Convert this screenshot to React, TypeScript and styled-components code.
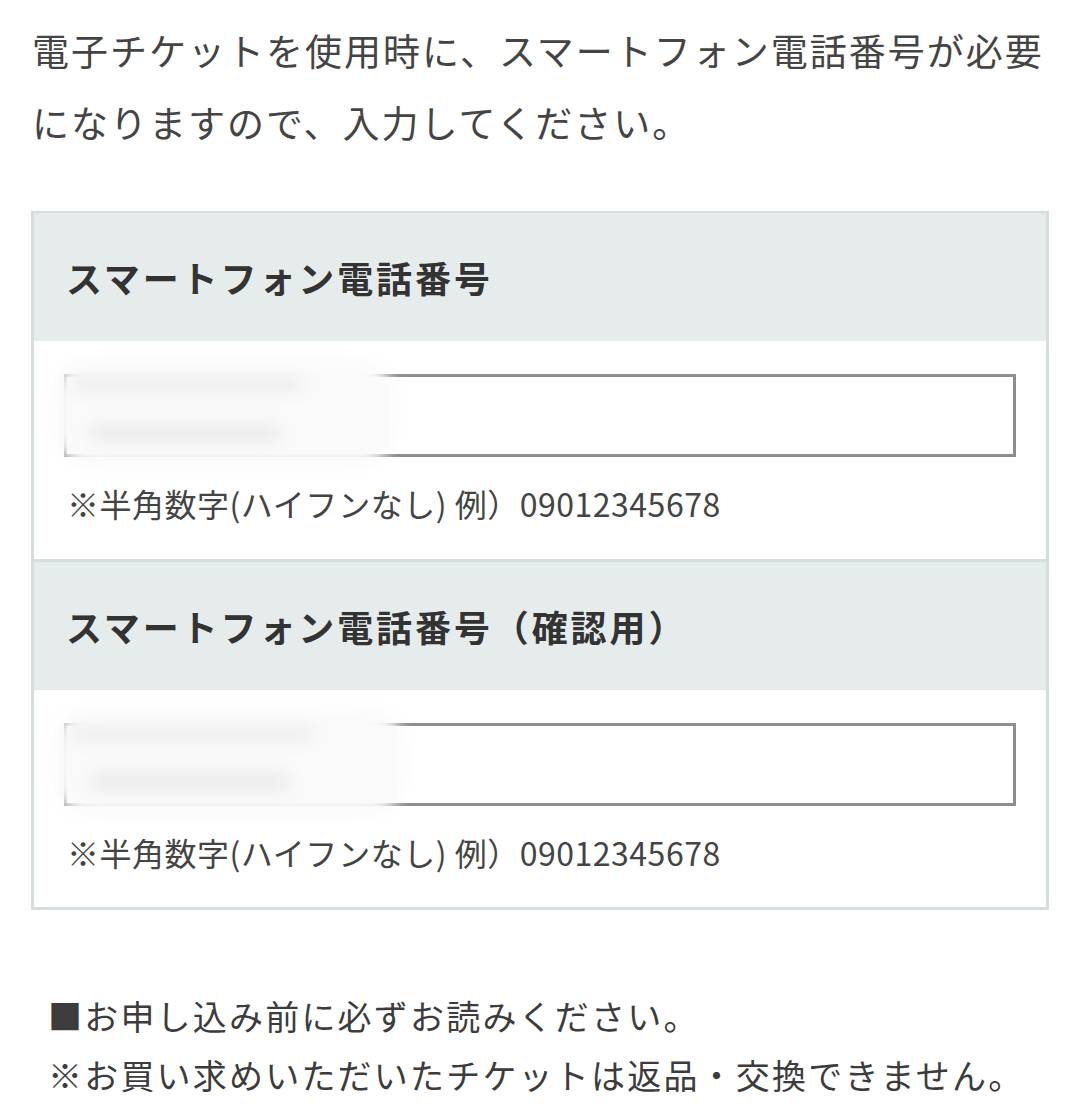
import React from 'react'
import styled, { createGlobalStyle } from 'styled-components'

const GlobalStyle = createGlobalStyle`
  html, body {
    margin: 0;
    padding: 0;
    background: #ffffff;
  }

  body {
    font-family: 'Noto Sans CJK JP', 'Noto Sans', sans-serif;
    color: #3f3f3f;
  }
`

const Page = styled.div`
  padding: 14px 30px 0 31px;
`

const Lead = styled.p`
  margin: 0 0 53px 1px;
  font-size: 37px;
  line-height: 72px;
  letter-spacing: 2px;
  color: #444444;
`

const FormTable = styled.div`
  border: 3px solid #d6dedd;
  border-top-width: 2px;
  display: flex;
  flex-direction: column;
`

const FieldHead = styled.div`
  background: #e6ecec;
  height: 128px;
  display: flex;
  align-items: center;
  padding-left: 32px;
  font-size: 36px;
  font-weight: 700;
  letter-spacing: 2.9px;
  color: #333333;
`

const FieldBody = styled.div<{ last?: boolean }>`
  background: #ffffff;
  padding: 33px 30px 0 30px;
  height: ${({ last }) => (last ? '217px' : '221px')};
  box-sizing: border-box;
  border-bottom: ${({ last }) => (last ? 'none' : '3px solid #d6dedd')};
`

const InputWrap = styled.div`
  position: relative;
`

const PhoneInput = styled.input`
  display: block;
  width: 100%;
  height: 83px;
  box-sizing: border-box;
  border: 3px solid #8d8d8d;
  background: #ffffff;
  outline: none;
  font-size: 32px;
  padding: 0 16px;
`

// 元画像のモザイク部分
const Smudge = styled.div<{ w: number }>`
  position: absolute;
  left: -10px;
  top: -14px;
  width: ${({ w }) => w}px;
  height: 106px;
  border-radius: 36px;
  background: #fafafa;
  filter: blur(7px);
  pointer-events: none;

  &::before,
  &::after {
    content: '';
    position: absolute;
    border-radius: 10px;
    background: #e6e6e6;
    filter: blur(6px);
  }

  &::before {
    left: 18px;
    top: 20px;
    width: ${({ w }) => w - 110}px;
    height: 10px;
  }

  &::after {
    left: 36px;
    top: 66px;
    width: ${({ w }) => w - 150}px;
    height: 14px;
  }
`

const Hint = styled.div`
  margin-top: 26px;
  padding-left: 3px;
  font-size: 32px;
  line-height: 40px;
  letter-spacing: 0.5px;
  color: #444444;
`

const Notes = styled.div`
  margin: 76px 0 0 17px;
  font-size: 34px;
  line-height: 59px;
  letter-spacing: 2.2px;
  color: #3c3c3c;
`

const NoteLine = styled.div``

interface FieldProps {
  label: string
  last?: boolean
  smudge: number
}

const PhoneField: React.FC<FieldProps> = ({ label, last, smudge }) => (
  <>
    <FieldHead>{label}</FieldHead>
    <FieldBody last={last}>
      <InputWrap>
        <PhoneInput type="tel" />
        <Smudge w={smudge} />
      </InputWrap>
      <Hint>※半角数字(ハイフンなし) 例）09012345678</Hint>
    </FieldBody>
  </>
)

export default function App() {
  return (
    <Page>
      <GlobalStyle />
      <Lead>
        電子チケットを使用時に、スマートフォン電話番号が必要になりますので、入力してください。
      </Lead>
      <FormTable>
        <PhoneField label="スマートフォン電話番号" smudge={340} />
        <PhoneField label="スマートフォン電話番号（確認用）" smudge={350} last />
      </FormTable>
      <Notes>
        <NoteLine>■お申し込み前に必ずお読みください。</NoteLine>
        <NoteLine>※お買い求めいただいたチケットは返品・交換できません。</NoteLine>
      </Notes>
    </Page>
  )
}
